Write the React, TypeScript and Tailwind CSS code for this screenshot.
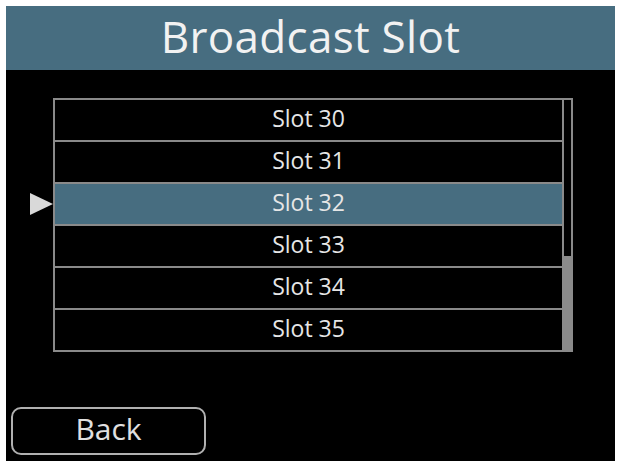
import React from "react";

const slots = [30, 31, 32, 33, 34, 35];
const selected = 32;

export default function App() {
  return (
    <div
      className="w-[621px] h-[464px] bg-white pt-[6px] pl-[6px] pr-[6px] pb-[3px]"
      style={{ fontFamily: '"Open Sans", "Noto Sans", sans-serif' }}
    >
      <div className="w-full h-full bg-black flex flex-col">
        <div className="h-[64px] bg-[#476d80] flex items-center justify-center">
          <span className="text-[44px] leading-none text-[#f2f2f2] tracking-[0.3px] -mt-[4px]">
            Broadcast Slot
          </span>
        </div>
        <div className="mt-[28px] ml-[47px] w-[520px] h-[254px] border-2 border-[#8a8a8a] flex">
          <div className="flex-1 flex flex-col border-r-2 border-[#8a8a8a]">
            {slots.map((s, i) => (
              <div
                key={s}
                className={
                  "relative h-[40px] flex items-center justify-center text-[23px] leading-none text-[#e6e6e6] " +
                  (i > 0 ? "h-[42px] border-t-2 border-[#8a8a8a] " : "") +
                  (s === selected ? "bg-[#476d80]" : "bg-black")
                }
              >
                {s === selected && (
                  <svg
                    className="absolute -left-[25px] top-[9px]"
                    width="23"
                    height="22"
                    viewBox="0 0 23 22"
                  >
                    <polygon points="0,0 23,11 0,22" fill="#d9d9d9" />
                  </svg>
                )}
                <span className="-mt-[4px]">Slot {s}</span>
              </div>
            ))}
          </div>
          <div className="w-[7px] flex flex-col justify-end">
            <div className="h-[94px] bg-[#8a8a8a]" />
          </div>
        </div>
        <div className="flex-1" />
        <div className="ml-[5px] mb-[6px] w-[195px] h-[48px] rounded-[10px] border-2 border-[#b0b0b0] flex items-center justify-center">
          <span className="text-[30px] leading-none text-[#e0e0e0] -mt-[5px]">Back</span>
        </div>
      </div>
    </div>
  );
}
